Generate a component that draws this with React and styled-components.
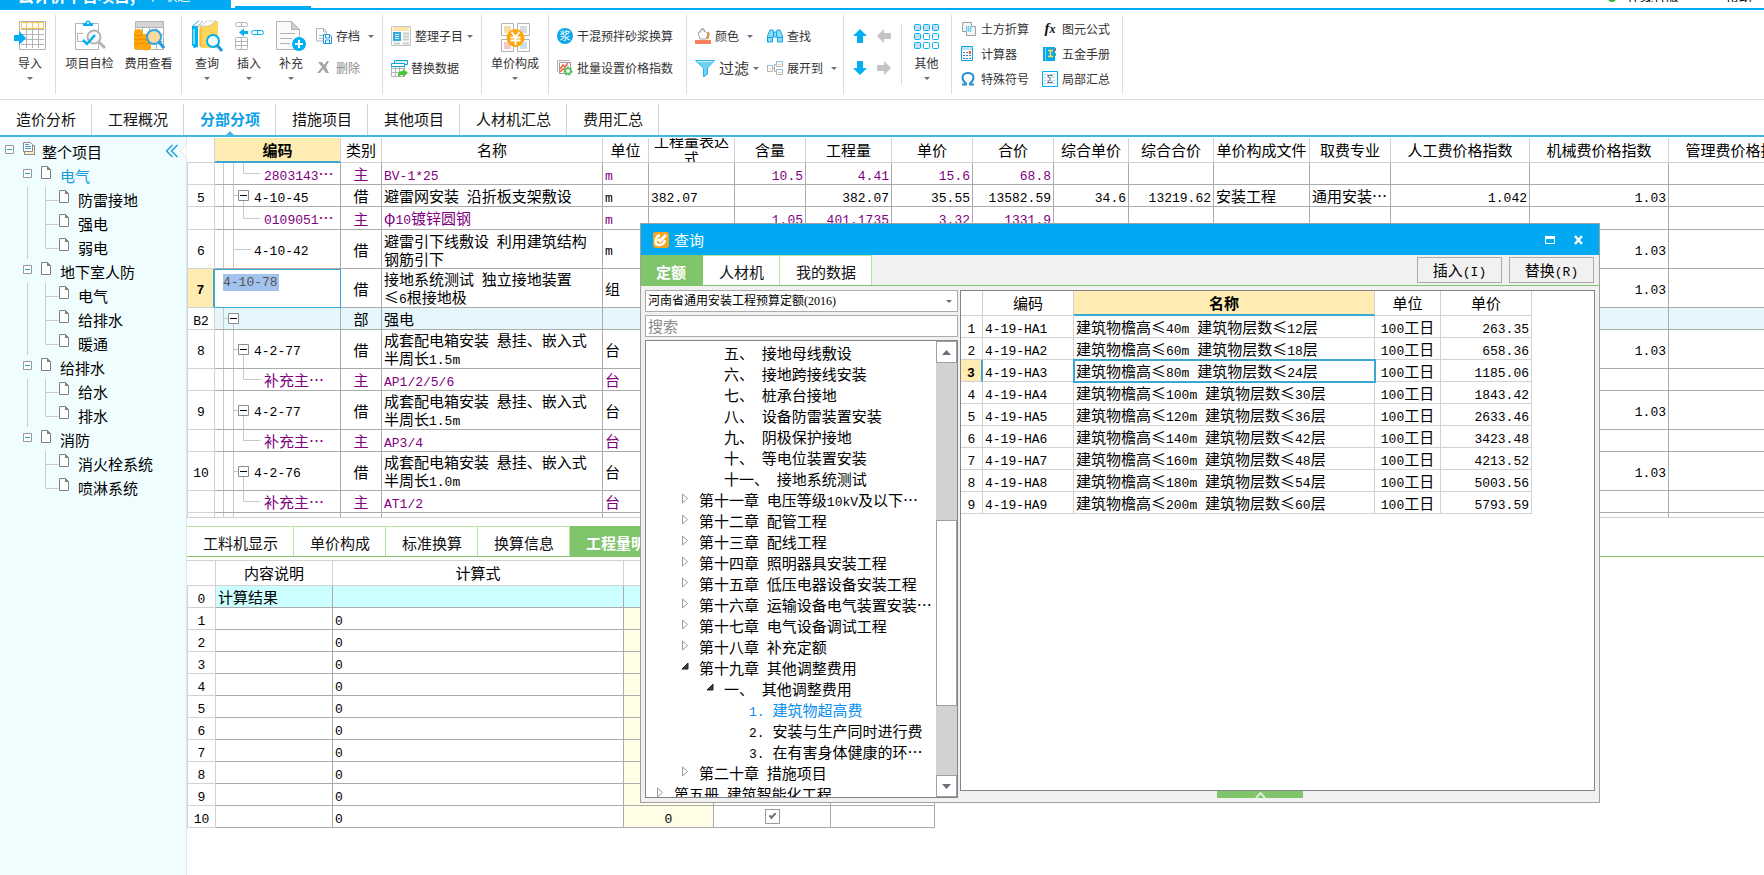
import React from "react";
import styled, { createGlobalStyle, css } from "styled-components";

const C = {
  blue: "#00a9f2",
  line: "#43b4e4",
  accent: "#3ba7d5",
  grid: "#ababab",
  soft: "#d2d2d2",
  green: "#80c56c",
  pale: "#b3e6a3",
  gold: "#feecb3",
  purple: "#800080",
};

const Global = createGlobalStyle`
  *, *::before, *::after { box-sizing: border-box; }
  html, body { margin: 0; }
  body {
    font-family: "Noto Sans CJK SC", "Noto Sans", sans-serif;
    font-size: 15px; line-height: 17px; color: #000; background: #fff; overflow: hidden;
  }
  button, input, select { font: inherit; color: inherit; margin: 0; }
  button { background: none; border: 0; padding: 0; white-space: nowrap; cursor: pointer; }
  svg { display: block; flex: none; }
  ul { list-style: none; margin: 0; padding: 0; }
`;

/* ---------- text ---------- */

const Latin = styled.span`
  font-family: "Liberation Mono", "Noto Sans CJK SC", monospace;
  font-size: 13px;
  line-height: 13px;
`;

const Text = ({ children }) =>
  String(children)
    .split(/([ -~]+)/)
    .map((part, i) => (i % 2 ? <Latin key={i}>{part}</Latin> : part));

/* ---------- page frame ---------- */

const Page = styled.div`
  min-height: 100vh;
  display: flex;
  flex-direction: column;
  overflow: hidden;
`;

const TitleStrip = styled.header`
  display: flex;
  justify-content: space-between;
  height: 10px;
  border-bottom: 2px solid ${C.blue};
`;

const TitleLeft = styled.div`
  display: flex;
  align-items: flex-end;
  gap: 4px;
`;

const Brand = styled.div`
  width: 231px;
  height: 8px;
  padding-left: 18px;
  background: ${C.blue};
  color: #fff;
  display: flex;
  align-items: flex-end;
  gap: 16px;
  overflow: hidden;
  line-height: 14px;
  font-size: 16px;
  span { font-size: 13px; }
  > * { margin-bottom: 6px; }
`;

const TitleTab = styled.div`
  width: 76px;
  height: 2px;
  background: ${C.blue};
`;

const TitleRight = styled.div`
  display: flex;
  align-items: flex-end;
  gap: 11px;
  height: 2px;
  overflow: hidden;
  margin-right: 12px;
  font-size: 13px;
  line-height: 12px;
  span:last-child { margin-left: 36px; }
`;

const Online = styled.span`
  width: 8px;
  height: 8px;
  border-radius: 4px;
  background: #2fb52f;
`;

const Toolbar = styled.div`
  display: flex;
  align-items: center;
  height: 90px;
  border-bottom: 1px solid #dcdcdc;
  font-size: 12px;
  line-height: 14px;
  color: #333;
`;

const Group = styled.div`
  display: flex;
  height: ${(p) => (p.$short ? 61 : 79)}px;
  width: ${(p) => p.$w}px;
  padding-left: ${(p) => p.$pad || 0}px;
  border-right: 1px solid #dcdcdc;
  flex: none;
  ${(p) => p.$short && css`align-items: center;`}
`;

const BigButton = styled.button`
  display: flex;
  flex-direction: column;
  align-items: center;
  flex: none;
  width: ${(p) => p.$w}px;
  padding-top: 5px;
  > svg:first-child { margin-bottom: 4px; }
`;

const Caret = styled.span`
  width: 0;
  height: 0;
  border: 3px solid transparent;
  border-top: 3px solid #6b6e7b;
  border-bottom: 0;
  ${BigButton} & { margin-top: 7px; }
  ${(p) => p.$gap && css`margin-left: ${p.$gap}px;`}
`;

const Stack = styled.div`
  display: flex;
  flex-direction: column;
  width: ${(p) => (p.$w ? p.$w + "px" : "auto")};
  padding-top: ${(p) => (p.$dense ? 1 : 5)}px;
  padding-left: ${(p) => p.$pad || 0}px;
  flex: none;
`;

const SmallButton = styled.button`
  display: flex;
  align-items: center;
  gap: ${(p) => p.$gap ?? 4}px;
  height: ${(p) => (p.$dense ? 25 : 32)}px;
  color: ${(p) => (p.$off ? "#8c8c8c" : "inherit")};
  font-size: ${(p) => (p.$large ? 15 : 12)}px;
`;

const ArrowPad = styled.div`
  display: grid;
  grid-template-columns: 16px 16px;
  column-gap: 8px;
  row-gap: 16px;
  padding-bottom: 6px;
`;

/* ---------- tabs ---------- */

const NavTabs = styled.nav`
  display: flex;
  align-items: flex-end;
  height: 37px;
  border-bottom: 2px solid ${C.line};
`;

const NavTab = styled.button`
  display: flex;
  flex-direction: column;
  align-items: center;
  height: 31px;
  padding: 6px 15px 0 16px;
  border-right: 1px solid ${C.soft};
  color: ${(p) => (p.$on ? "#0aa0e6" : "#111")};
  font-weight: ${(p) => (p.$on ? 700 : 400)};
  &::after {
    content: "";
    display: ${(p) => (p.$on ? "block" : "none")};
    margin-top: 4px;
    border: 4px solid transparent;
    border-top: 0;
    border-bottom-color: ${C.line};
  }
`;

const GreenTabs = styled.div`
  display: flex;
  height: 31px;
  border-bottom: 1px solid ${C.green};
  flex: none;
`;

const GreenTab = styled.button`
  padding: ${(p) => (p.$first ? "1px 16px 0 15px" : "1px 15px 0 16px")};
  background: ${(p) => (p.$on ? C.green : "#fff")};
  color: ${(p) => (p.$on ? "#fff" : "#111")};
  font-weight: ${(p) => (p.$on ? 700 : 400)};
  border-top: 1px solid ${(p) => (p.$on ? C.green : C.pale)};
  border-right: 1px solid ${(p) => (p.$on ? C.green : C.pale)};
`;

/* ---------- side tree ---------- */

const Body = styled.div`
  flex: 1;
  display: flex;
  min-height: 0;
`;

const Side = styled.aside`
  width: 187px;
  flex: none;
  padding-top: 2px;
  background: #f0fdff;
  border-right: 1px solid #dde6e8;
`;

const SideRow = styled.li`
  display: flex;
  height: 24px;
  padding-left: ${(p) => p.$pad}px;
  color: ${(p) => (p.$on ? "#159bd7" : "#000")};
  > svg { margin-top: ${(p) => (p.$guided ? 0 : 3)}px; }
`;

const SideLabel = styled.span`
  padding: 4px 0 0 ${(p) => p.$gap ?? 9}px;
  flex: 1;
`;

const Collapse = styled.button`
  display: flex;
  align-items: center;
  width: 20px;
  svg + svg { margin-left: 1px; }
`;

/* ---------- grids ---------- */

const Main = styled.main`
  flex: 1;
  min-width: 0;
  display: flex;
  flex-direction: column;
  gap: 8px;
`;

const GridClip = styled.div`
  overflow: hidden;
  padding-top: 1px;
`;

const Grid = styled.table`
  table-layout: fixed;
  width: ${(p) => p.$w}px;
  border-collapse: separate;
  border-spacing: 0;
`;

const Th = styled.th`
  height: 25px;
  padding: 0;
  font-weight: ${(p) => (p.$on ? 700 : 400)};
  background: ${(p) => (p.$on ? C.gold : "#fff")};
  border-right: 1px solid ${C.soft};
  border-bottom: ${(p) => (p.$on ? `2px solid ${C.accent}` : `1px solid ${C.soft}`)};
`;

const HeadBox = styled.div`
  display: flex;
  align-items: center;
  justify-content: center;
  height: ${(p) => (p.$on ? 23 : 24)}px;
  padding-bottom: ${(p) => (p.$on ? 1 : 2)}px;
  overflow: hidden;
`;

const Td = styled.td`
  height: ${(p) => p.$h || 22}px;
  padding: 0 2px;
  text-align: ${(p) => p.$align || "left"};
  white-space: pre-line;
  overflow: hidden;
  color: ${(p) => p.$color || "#000"};
  background: ${(p) => p.$bg || "transparent"};
  border-right: 1px solid ${(p) => (p.$soft ? C.soft : C.grid)};
  border-bottom: 1px solid ${(p) => (p.$soft || p.$h < 10 ? C.soft : C.grid)};
  ${(p) => p.$focus && css`outline: 2px solid ${C.accent}; outline-offset: -1px;`}
`;

const NumTd = styled(Td)`
  padding: 0;
  text-align: center;
  font-weight: ${(p) => (p.$on ? 700 : 400)};
  background: ${(p) => (p.$on ? C.gold : "#fff")};
  border-color: ${C.soft};
  ${(p) => p.$edge && css`border-left: 1px solid ${C.soft};`}
  ${(p) => p.$on && css`border-right: 2px solid ${C.accent};`}
`;

const CodeTd = styled(Td)`
  padding: 0;
  ${(p) => p.$edit && css`border-color: ${C.accent}; background: #fff; box-shadow: inset 0 1px ${C.accent};`}
`;

const CodeBox = styled.div`
  display: flex;
  align-items: center;
  height: ${(p) => p.$h}px;
  overflow: hidden;
  white-space: nowrap;
`;

const CodeInput = styled.input`
  display: block;
  width: 56px;
  height: 17px;
  margin: 5px 0 16px 8px;
  padding: 0;
  border: 0;
  background: #a3c3ee;
  color: #555;
  font-family: "Liberation Mono", monospace;
  font-size: 13px;
`;

const Check = styled.input`
  appearance: none;
  display: block;
  width: 15px;
  height: 15px;
  margin: 0 auto;
  border: 1px solid #9a9a9a;
  background: #fff;
  &::after {
    content: "";
    display: block;
    width: 7px;
    height: 4px;
    margin: 3px;
    border: solid #6b6e7b;
    border-width: 0 0 2px 2px;
    transform: rotate(-45deg);
  }
`;

/* ---------- dialog ---------- */

const Dialog = styled.section`
  position: absolute;
  left: 640px;
  top: 223px;
  width: 960px;
  height: 580px;
  display: flex;
  flex-direction: column;
  background: #f1f1f1;
  border: 1px solid #a0a0a0;
`;

const DialogTitle = styled.header`
  display: flex;
  align-items: center;
  height: 31px;
  padding: 0 13px 0 12px;
  gap: 5px;
  background: ${C.blue};
  color: #fff;
  flex: none;
  h2 { margin: 0; font-size: 15px; font-weight: 400; flex: 1; }
  button { width: 12px; }
  button + button { margin-left: 12px; }
`;

const Actions = styled.div`
  flex: 1;
  display: flex;
  justify-content: flex-end;
  gap: 7px;
  padding: 2px 5px 0 0;
`;

const ActionButton = styled.button`
  width: 85px;
  height: 26px;
  border: 1px solid ${C.grid};
  background: #f1f1f1;
`;

const DialogBody = styled.div`
  flex: 1;
  min-height: 0;
  display: flex;
  gap: 2px;
  padding: 4px;
`;

const Picker = styled.div`
  width: 313px;
  display: flex;
  flex-direction: column;
  gap: 3px;
`;

const SelectBox = styled.div`
  display: flex;
  align-items: center;
  height: 22px;
  padding-right: 5px;
  background: #fff;
  border: 1px solid ${C.grid};
  select {
    flex: 1;
    appearance: none;
    border: 0;
    background: none;
    height: 20px;
    padding: 0 2px;
    font-size: 12px;
    font-family: "Liberation Serif", "Noto Sans CJK SC", serif;
  }
`;

const SearchInput = styled.input`
  height: 22px;
  padding: 0 2px 2px;
  background: #fff;
  border: 1px solid ${C.grid};
  &::placeholder { color: #8a8a8a; }
`;

const TreeBox = styled.div`
  flex: 1;
  min-height: 0;
  display: flex;
  overflow: hidden;
  background: #fff;
  border: 1px solid #83838f;
`;

const TreeList = styled.ul`
  flex: 1;
  padding-top: 1px;
  overflow: hidden;
`;

const TreeItem = styled.li`
  display: flex;
  align-items: center;
  height: 21px;
  padding-left: ${(p) => 10 + p.$depth * 25}px;
  white-space: nowrap;
  color: ${(p) => (p.$on ? "#0a8ff0" : "#000")};
`;

const Twist = styled.span`
  width: 18px;
  padding-bottom: 2px;
  flex: none;
`;

const Scroll = styled.div`
  width: 21px;
  display: flex;
  flex-direction: column;
  background: ${C.soft};
`;

const ScrollButton = styled.button`
  display: flex;
  align-items: center;
  justify-content: center;
  height: 22px;
  background: #fff;
  border: 1px solid #a0a0a0;
`;

const Thumb = styled.div`
  height: 186px;
  margin: 157px 0 auto;
  background: #fff;
  border: 1px solid #a0a0a0;
`;

const Results = styled.div`
  flex: 1;
  min-width: 0;
  display: flex;
  flex-direction: column;
`;

const ResultsPane = styled.div`
  flex: 1;
  background: #fff;
  border: 1px solid #83838f;
`;

const PullUp = styled.button`
  display: flex;
  justify-content: center;
  align-items: flex-end;
  width: 86px;
  height: 7px;
  margin-left: 257px;
  background: ${C.green};
`;

/* ---------- toolbar icons ---------- */

const S = ({ w, h, children, ...r }) => (
  <svg width={w} height={h} viewBox={`0 0 ${w} ${h}`} fill="none" aria-hidden="true" {...r}>
    {children}
  </svg>
);
const G = "#b3b3b3";
const B = "#00b0f0";

const ImportIcon = () => (
  <S w={32} h={32}>
    <path d="M5.5 1.500h26v28h-26z" fill="#fff" stroke={G} />
    <path d="M7 9.500h23M7 14.500h23M7 19.500h23M7 24.500h23M12.500 9v19M18.500 9v19M24.500 9v19" stroke={G} />
    <path d="M7.500 2.500h22v6h-22zM12.500 3v6M18.500 3v6M24.500 3v6" stroke="#fcc44e" />
    <path d="M0 15h5v-4l7 7-7 7v-4H0z" fill={B} />
  </S>
);
const CheckDocIcon = () => (
  <S w={32} h={32}>
    <path d="M1.500 3.500h23v26h-23z" fill="#fff" stroke={G} />
    <path d="M9 3h2.500a2.500 2.500 0 0 1 5 0H19v3H9z" fill={B} />
    <circle cx="14" cy="3" r="1" fill="#fff" />
    <path d="M9 13.500H3.500v8H9" stroke={G} />
    <circle cx="20" cy="17" r="6.500" stroke={G} strokeWidth="2" fill="#f6f6f6" />
    <path d="M25 22l6 6" stroke={G} strokeWidth="3" />
    <path d="M9 20l4 4 8-9" stroke={B} strokeWidth="2.500" />
  </S>
);
const CostIcon = () => (
  <S w={32} h={32}>
    <path d="M2.500 1.500h28v28h-28z" fill="#fff" stroke={G} />
    <path d="M3 2h27v5H3z" fill="#d5d5d5" />
    <path d="M3 7.500h27M3 14.500h27M3 21.500h27M9.500 8v21M16.500 8v21M23.500 8v21" stroke={G} />
    <path d="M1 12c0-4 9-4 9 0v3c2-2 8-1 8 2v11c0 3-8 3-9 1-1 1-8 1-8-1z" fill="#ffa60d" />
    <path d="M1 15q4 2 9 0M1 19q4 2 8 0M1 23q4 2 8 0M9 19q4 2 9 0M9 23q4 2 9 0" stroke="#e88600" />
    <circle cx="21" cy="17" r="7" fill="#fdd9a0" stroke="#29a7e8" strokeWidth="2" />
    <path d="M26 22l5 6" stroke="#1b9ce2" strokeWidth="3" />
  </S>
);
const BooksIcon = () => (
  <S w={32} h={32}>
    <path d="M1 6l6-5 5 0-5 6v20l-4 1-2-3z" fill={B} />
    <path d="M2 6l6-5h4L7 6z" fill="#fff" stroke={G} strokeDasharray="1 1" />
    <path d="M3 9v15" stroke="#fff" />
    <path d="M8 7l8-6h11v27H11l-3-2z" fill="#fdd45c" />
    <path d="M9 6l7-5h9l-7 5z" fill="#fff" stroke={G} strokeDasharray="1 1" />
    <path d="M10 8v19" stroke="#e8b02c" />
    <circle cx="22" cy="21" r="6" fill="#eefaff" stroke={B} strokeWidth="2" />
    <path d="M26 25l5 6" stroke="#1b9ce2" strokeWidth="3" />
  </S>
);
const InsertIcon = () => (
  <S w={32} h={32}>
    <rect x="2.500" y="2.500" width="12" height="4" rx="2" stroke={G} />
    <path d="M8.500 3v4" stroke={G} />
    <rect x="2.500" y="17.500" width="12" height="12" rx="1" stroke={G} />
    <path d="M8.500 18v11M3 21.500h11M3 25.500h11" stroke={G} />
    <rect x="18.500" y="10.500" width="12" height="4" rx="2" stroke={B} />
    <path d="M24.500 11v4" stroke={B} />
    <path d="M6 12.500l5-4V11h4v3h-4v2.500z" fill={B} />
  </S>
);
const SupplyIcon = () => (
  <S w={32} h={32}>
    <path d="M1.500 1.500h15l8 8v20h-23z" fill="#fafafa" stroke={G} />
    <path d="M16.500 1.500v8h8z" fill="#cfcfcf" stroke={G} />
    <path d="M5 13.500h15M5 18.500h12M5 23.500h10" stroke={G} />
    <circle cx="24" cy="24" r="7" fill={B} />
    <path d="M24 20v8M20 24h8" stroke="#fff" strokeWidth="2" />
  </S>
);
const ArchiveIcon = () => (
  <S w={16} h={16}>
    <path d="M.5.500h7l3 3V13H.5z" fill="#fff" stroke={G} />
    <path d="M7.500 1v3h3M3 7.500h4M3 10.500h4" stroke={G} />
    <path d="M7.500 6.500h6l2 2v7h-8z" fill="#fff" stroke="#1b9ce2" />
    <path d="M9.500 7v3h4V7M9.500 15v-3h4v3" stroke="#1b9ce2" />
  </S>
);
const DeleteIcon = () => (
  <S w={16} h={16}>
    <path d="M2 2l4 0 2 3 3-4h2l-3 6 3 6h-3l-3-4-3 4H1l5-6z" fill="#a6a6a6" />
  </S>
);
const ArrangeIcon = () => (
  <S w={20} h={20}>
    <path d="M.5.500h19v19H.5z" fill="#fafafa" stroke="#c4c4c4" />
    <path d="M2 1h16v4H2z" fill="#fbe5aa" />
    <path d="M2 6h8v9H2z" fill="#33a9e0" />
    <path d="M4 8.500h4M4 10.500h4M4 12.500h4" stroke="#d9f3ff" />
    <path d="M12 7.500h6M12 10.500h6M12 13.500h6M3 17.500h6M12 17.500h6" stroke="#c8ccd0" strokeWidth="2" />
  </S>
);
const ReplaceIcon = () => (
  <S w={17} h={17}>
    <path d="M.5 4.500h13v12H.5zM1 8.500h12M1 12.500h12M4.500 5v11M8.500 5v11" fill="#fff" stroke={G} />
    <path d="M3.500.500h13v4h-13z" fill="#d6f3ff" stroke="#12a3df" />
    <path d="M.5 3.500h13v3H.5z" fill="#fff" stroke="#12a3df" />
    <path d="M7 15c0-3 2-4 5-4V9l5 4-5 4v-2c-2 0-3 0-5 2z" fill="#4bc435" />
  </S>
);
const PriceIcon = () => (
  <S w={32} h={32}>
    <path d="M2.500 3.500h12v12h-12zM18.500 3.500h12v12h-12zM2.500 19.500h12v12h-12zM18.500 19.500h12v12h-12z" fill="#fff" stroke={G} />
    <path d="M5 6h7v7H5z" fill="#f3dfa7" />
    <path d="M21 6h7v7h-7z" fill="#d9d9de" />
    <path d="M5 22h7v7H5z" fill="#f3c8cb" />
    <path d="M21 22h7v7h-7z" fill="#c8e0ee" />
    <circle cx="16.500" cy="18" r="9" fill="#ffa60d" />
    <path d="M12.500 12l4 5 4-5M11.500 17.500h10M11.500 20.500h10M16.500 17v8" stroke="#fff" strokeWidth="2" />
  </S>
);
const Badge = styled.span`
  width: 16px;
  height: 16px;
  border-radius: 8px;
  background: #0ba6ea;
  color: #fff;
  font-size: 11px;
  line-height: 15px;
  text-align: center;
`;
const IndexIcon = () => (
  <S w={16} h={16}>
    <path d="M.5 12V.500h12" stroke={G} />
    <path d="M2.500 2.500h11v11h-11z" fill="#fff" stroke="#9a9a9a" />
    <path d="M3 9l3-4 2 2 3-4M3 12l3-3 2 1" stroke="#f0623c" strokeWidth="1.500" />
    <circle cx="11" cy="11" r="3.500" fill="#fff" stroke="#3fb34b" strokeWidth="2" strokeDasharray="2 1" />
    <circle cx="11" cy="11" r="2.500" stroke="#3fb34b" />
  </S>
);
const ColorIcon = () => (
  <S w={16} h={16}>
    <path d="M0 12h16v4H0z" fill="#f8805c" />
    <path d="M3 5l5-4 5 5-2 5H5z" fill="#fff" stroke="#a0a0a0" />
    <path d="M5 5c0-6 5-6 4-1" stroke="#a0a0a0" />
    <path d="M13 4c1 2 1 4-1 7" stroke="#e09048" strokeWidth="2" />
  </S>
);
const FilterIcon = () => (
  <S w={20} h={17}>
    <path d="M.5.500h19L12.500 8v6l-4 3V8z" fill="#6fd0f5" stroke="#2ab0ea" />
    <path d="M2 1.500h16" stroke="#c9effd" />
  </S>
);
const BinocularIcon = () => (
  <S w={16} h={16}>
    <path d="M3 2h3v2h4V2h3l2.500 6v6h-5v-5h-5v5h-5V8z" fill="#8adcf9" stroke="#12a3df" />
    <path d="M6.500 4v5M9.500 4v5M1 9.500h4M11 9.500h4" stroke="#12a3df" />
  </S>
);
const ExpandIcon = () => (
  <S w={16} h={16}>
    <path d="M.5 5.500h5v6h-5zM9.500 1.500h6v5h-6zM9.500 9.500h6v5h-6z" fill="#fff" stroke={G} />
    <path d="M0 5.500h6M9 1.500h7M9 9.500h7" stroke="#7fc4e6" />
    <path d="M6 8.500h2M7.500 4.500v7M7 4.500h3M7 11.500h3" stroke={G} />
    <path d="M11 12.500h3M11 4.500h3M2 9h2" stroke="#f2cf8d" />
  </S>
);
const Arrow = ({ turn, color = B }) => (
  <S w={16} h={16}>
    <path d="M8 1l7 7h-4v7H5V8H1z" fill={color} transform={`rotate(${turn} 8 8)`} />
  </S>
);
const OtherIcon = () => (
  <S w={26} h={32}>
    {[0, 1, 2].map((r) =>
      [0, 1, 2].map((c) => (
        <rect key={`${r}${c}`} x={c * 9 + 0.5} y={r * 9 + 4.5} width="6" height="6" rx="1" stroke={B} fill={r === 0 || c === 0 ? "#bfe0f3" : "#fff"} />
      ))
    )}
  </S>
);
const EarthIcon = () => (
  <S w={16} h={16}>
    <path d="M1.500 1.500h9v9h-9z" fill="#f4f4f4" stroke="#9f9f9f" />
    <path d="M5.500 5.500h9v9h-9z" fill="#f4f4f4" stroke="#9f9f9f" />
    <path d="M5 5h6v6H5z" fill="#bfeaf5" />
    <path d="M5 6h6M5 8h6M5 10h6" stroke="#2bb3cf" strokeDasharray="1 1" />
  </S>
);
const CalcIcon = () => (
  <S w={16} h={16}>
    <path d="M.5.500h11v14H.5z" fill="#fff" stroke="#12a3df" />
    <path d="M1 1h10v3H1z" fill="#bce6f8" />
    <path d="M2 6.500h8M2 9.500h8M2 12.500h8" stroke="#2d87c3" strokeDasharray="2 1" />
    <path d="M8 5h2v3H8z" fill="#f0523c" />
  </S>
);
const OmegaIcon = () => (
  <S w={16} h={16}>
    <path d="M1 13.500h4v-1C2 10 1.500 8 1.500 6.500c0-6 11-6 11 0 0 1.500-.5 3.500-3.500 6v1h4" stroke="#2c90cf" strokeWidth="2" />
  </S>
);
const Fx = styled.span`
  width: 16px;
  font: italic 700 15px/16px "Liberation Serif", serif;
  color: #111;
  small { font-size: 12px; }
`;
const HandbookIcon = () => (
  <S w={16} h={16}>
    <path d="M1 1h12v14H1z" fill="#09a9ec" />
    <path d="M3.500 2v12" stroke="#7fd8fa" />
    <path d="M6 4.500h5M6 10.500h5M8.500 4v7" stroke="#ffe14d" strokeWidth="1.500" />
    <path d="M13 2h1v3h-1z" fill="#f0523c" />
    <path d="M13 7h1v3h-1z" fill="#4bc435" />
  </S>
);
const SumIcon = () => (
  <S w={16} h={16}>
    <path d="M.5.500h15v15H.5z" fill="#fff" stroke={B} />
    <path d="M2 3.500h12M2 6.500h12M2 9.500h12M2 12.500h12" stroke="#9fd8ee" strokeDasharray="2 1" />
    <path d="M10.500 5.500v-1h-5l3 3.500-3 3.500h5v-1" stroke="#6f6f6f" />
  </S>
);

/* ---------- small glyphs ---------- */

const Minus = () => (
  <S w={10} h={14}>
    <path d="M.5 3.500h8v8h-8z" fill="#fff" stroke="#9a9a9a" />
    <path d="M2 7.500h5" stroke="#2f9fd0" />
  </S>
);
const DocIcon = () => (
  <S w={11} h={14}>
    <path d="M.5.500h6l3 3v9h-9z" fill="#fff" stroke="#808080" />
    <path d="M6 0l4 4H6z" fill="#808080" />
  </S>
);
const ProjectIcon = () => (
  <S w={13} h={14}>
    <path d="M3.500 3.500h8v9h-10v-3" fill="#fdf0c4" stroke="#8a8a8a" />
    <path d="M.5.500h7l2 2v7h-9z" fill="#fff" stroke="#8a8a8a" />
    <path d="M2 2.500h4M2 4.500h6M2 6.500h6" stroke="#4d9cc4" />
  </S>
);
const SideGuide = ({ last, trunk }) => (
  <S w={32} h={24}>
    {trunk && <path d="M.5 0v24" stroke="#c4cccd" />}
    <path d={`M18.500 0v${last ? 13 : 24}M18.500 13.500h13`} stroke="#c4cccd" />
  </S>
);
const Chevrons = () => (
  <S w={13} h={14}>
    <path d="M6.500 1l-6 6 6 6M11.500 1l-6 6 6 6" stroke="#1da1d3" strokeWidth="1.500" />
  </S>
);
const Notch = () => (
  <S w={7} h={14}>
    <path d="M7 0L0 7l7 7z" fill="#fff" stroke="#e3e3e3" />
  </S>
);

/* Connector lines and fold box at the left of a code cell. */
const CodeGuide = ({ kind, h }) => {
  const m = Math.floor(h / 2);
  const line = "#c8c8c8";
  const w = { part: 28, fold: 39, leaf: 39, child: 49 }[kind];
  const x = kind === "part" ? 13 : 23;
  const box = kind === "part" || kind === "fold";
  return (
    <S w={w} h={h}>
      <path d={`M8.500 0v${h}`} stroke={line} />
      {kind !== "part" && <path d={`M18.500 0v${h}`} stroke={line} />}
      {kind === "part" && <path d={`M9 ${m}.5h5M18.500 ${m}V${h}`} stroke={line} />}
      {kind === "fold" && <path d={`M19 ${m}.5h5M28.500 ${m}V${h}`} stroke={line} />}
      {kind === "leaf" && h > 10 && <path d={`M19 ${m}.5h17`} stroke={line} />}
      {kind === "child" && <path d={`M28.500 0v${m}.5h17`} stroke={line} />}
      {box && <path d={`M${x}.5 ${m - 5}.5h10v10h-10z`} fill="#fff" stroke="#8c8c8c" />}
      {box && <path d={`M${x + 2} ${m}.5h7`} stroke="#000" />}
    </S>
  );
};

/* ---------- data ---------- */

const SIDE = [
  ["电气", ["防雷接地", "强电", "弱电"]],
  ["地下室人防", ["电气", "给排水", "暖通"]],
  ["给排水", ["给水", "排水"]],
  ["消防", ["消火栓系统", "喷淋系统"]],
];

const COLS = [
  ["", 28], ["编码", 126], ["类别", 41], ["名称", 221], ["单位", 46], ["工程量表达式", 86],
  ["含量", 71], ["工程量", 86], ["单价", 81], ["合价", 81], ["综合单价", 75], ["综合合价", 85],
  ["单价构成文件", 96], ["取费专业", 81], ["人工费价格指数", 139], ["机械费价格指数", 139], ["管理费价格指数", 139],
];

const BOX = "成套配电箱安装 悬挂、嵌入式\n半周长";
const ROWS = [
  { k: "child", code: "2803143…", t: "主", name: "BV-1*25", u: "m", v: ["", "10.5", "4.41", "15.6", "68.8"] },
  { n: "5", k: "fold", code: "4-10-45", t: "借", name: "避雷网安装 沿折板支架敷设", u: "m", v: ["382.07", "", "382.07", "35.55", "13582.59", "34.6", "13219.62", "安装工程", "通用安装…", "1.042", "1.03"] },
  { k: "child", h: 23, code: "0109051…", t: "主", name: "φ10镀锌圆钢", u: "m", v: ["", "1.05", "401.1735", "3.32", "1331.9"] },
  { n: "6", k: "leaf", h: 39, code: "4-10-42", t: "借", name: "避雷引下线敷设 利用建筑结构\n钢筋引下", u: "m", idx: true },
  { n: "7", k: "edit", h: 39, code: "4-10-78", t: "借", name: "接地系统测试 独立接地装置\n≤6根接地极", u: "组", idx: true },
  { n: "B2", k: "part", code: "", t: "部", name: "强电", u: "" },
  { n: "8", k: "fold", h: 39, code: "4-2-77", t: "借", name: BOX + "1.5m", u: "台", idx: true },
  { k: "child", code: "补充主…", t: "主", name: "AP1/2/5/6", u: "台" },
  { n: "9", k: "fold", h: 39, code: "4-2-77", t: "借", name: BOX + "1.5m", u: "台", idx: true },
  { k: "child", code: "补充主…", t: "主", name: "AP3/4", u: "台" },
  { n: "10", k: "fold", h: 39, code: "4-2-76", t: "借", name: BOX + "1.0m", u: "台", idx: true },
  { k: "child", code: "补充主…", t: "主", name: "AT1/2", u: "台" },
  { k: "stub", h: 5, code: "", t: "", name: "", u: "" },
];
const LEFT = [0, 7, 8];

const TREE = [
  [2, "", "五、 接地母线敷设"], [2, "", "六、 接地跨接线安装"], [2, "", "七、 桩承台接地"],
  [2, "", "八、 设备防雷装置安装"], [2, "", "九、 阴极保护接地"], [2, "", "十、 等电位装置安装"],
  [2, "", "十一、 接地系统测试"],
  [1, "c", "第十一章 电压等级10kV及以下…"], [1, "c", "第十二章 配管工程"], [1, "c", "第十三章 配线工程"],
  [1, "c", "第十四章 照明器具安装工程"], [1, "c", "第十五章 低压电器设备安装工程"],
  [1, "c", "第十六章 运输设备电气装置安装…"], [1, "c", "第十七章 电气设备调试工程"],
  [1, "c", "第十八章 补充定额"], [1, "o", "第十九章 其他调整费用"], [2, "o", "一、 其他调整费用"],
  [3, "", "1. 建筑物超高费", true], [3, "", "2. 安装与生产同时进行费"], [3, "", "3. 在有害身体健康的环…"],
  [1, "c", "第二十章 措施项目"], [0, "c", "第五册 建筑智能化工程"],
];

const QUOTA = [
  [40, 12, "263.35"], [60, 18, "658.36"], [80, 24, "1185.06"], [100, 30, "1843.42"], [120, 36, "2633.46"],
  [140, 42, "3423.48"], [160, 48, "4213.52"], [180, 54, "5003.56"], [200, 60, "5793.59"],
];

const sum = (list) => list.reduce((a, c) => a + c[1], 0);

/* ---------- parts ---------- */

const GridHead = ({ cols, on }) => (
  <>
    <colgroup>{cols.map(([, w], i) => <col key={i} width={w} />)}</colgroup>
    <thead>
      <tr>
        {cols.map(([label], i) => (
          <Th key={i} $on={i > 0 && label === on}>
            <HeadBox $on={i > 0 && label === on}>{label}</HeadBox>
          </Th>
        ))}
      </tr>
    </thead>
  </>
);

const CodeCell = ({ row, h, bg, color }) => (
  <CodeTd $h={h} $edit={row.k === "edit"} $bg={bg} $color={color}>
    {row.k === "edit" ? (
      <CodeInput defaultValue={row.code} aria-label="编码" />
    ) : (
      <CodeBox $h={h - 1}>
        <CodeGuide kind={row.k === "stub" ? "leaf" : row.k} h={h - 1} />
        {row.code && <span><Text>{row.code}</Text></span>}
      </CodeBox>
    )}
  </CodeTd>
);

const BillRow = ({ row }) => {
  const h = row.h || 22;
  const color = row.k === "child" ? C.purple : "#000";
  const bg = row.k === "part" ? "#e5f6fc" : undefined;
  const v = row.v || [];
  const cell = { $h: h, $color: color, $bg: bg };
  return (
    <tr>
      <NumTd $h={h} $on={row.k === "edit"} $edge>{row.n && <Text>{row.n}</Text>}</NumTd>
      <CodeCell row={row} h={h} bg={bg} color={color} />
      <Td {...cell} $align="center">{row.t}</Td>
      <Td {...cell}><Text>{row.name}</Text></Td>
      <Td {...cell}><Text>{row.u}</Text></Td>
      {COLS.slice(5).map((_, i) => (
        <Td key={i} {...cell} $align={LEFT.includes(i) ? "left" : "right"}>
          <Text>{v[i] || (row.idx && i === 10 ? "1.03" : "")}</Text>
        </Td>
      ))}
    </tr>
  );
};

const DocBox = styled.span`
  padding-top: 3px;
`;

const SidePanel = () => (
  <Side>
    <ul>
      <SideRow $pad={5}>
        <Minus />
        <S w={8} h={1} />
        <ProjectIcon />
        <SideLabel $gap={6}>整个项目</SideLabel>
        <Collapse aria-label="收起"><Chevrons /><Notch /></Collapse>
      </SideRow>
      {SIDE.map(([name, kids], i) => (
        <React.Fragment key={name}>
          <SideRow $pad={23} $on={i === 0}>
            <Minus />
            <S w={8} h={1} />
            <DocIcon />
            <SideLabel $gap={8}>{name}</SideLabel>
          </SideRow>
          {kids.map((kid, j) => (
            <SideRow key={kid} $pad={27} $guided>
              <SideGuide last={j === kids.length - 1} trunk={i < SIDE.length - 1} />
              <DocBox><DocIcon /></DocBox>
              <SideLabel $gap={8}>{kid}</SideLabel>
            </SideRow>
          ))}
        </React.Fragment>
      ))}
    </ul>
  </Side>
);

const Ribbon = () => (
  <Toolbar>
    <Group $w={56}>
      <BigButton $w={60}><ImportIcon />导入<Caret /></BigButton>
    </Group>
    <Group $w={126} $pad={4}>
      <BigButton $w={59}><CheckDocIcon />项目自检</BigButton>
      <BigButton $w={59}><CostIcon />费用查看</BigButton>
    </Group>
    <Group $w={201} $pad={4}>
      <BigButton $w={42}><BooksIcon />查询<Caret /></BigButton>
      <BigButton $w={42}><InsertIcon />插入<Caret /></BigButton>
      <BigButton $w={42}><SupplyIcon />补充<Caret /></BigButton>
      <Stack $pad={4}>
        <SmallButton><ArchiveIcon />存档<Caret $gap={4} /></SmallButton>
        <SmallButton $off disabled><DeleteIcon />删除</SmallButton>
      </Stack>
    </Group>
    <Group $w={99} $pad={8}>
      <Stack>
        <SmallButton><ArrangeIcon />整理子目<Caret /></SmallButton>
        <SmallButton $gap={3}><ReplaceIcon />替换数据</SmallButton>
      </Stack>
    </Group>
    <Group $w={67}>
      <BigButton $w={66}><PriceIcon />单价构成<Caret /></BigButton>
    </Group>
    <Group $w={138} $pad={8}>
      <Stack>
        <SmallButton><Badge>浆</Badge>干混预拌砂浆换算</SmallButton>
        <SmallButton><IndexIcon />批量设置价格指数</SmallButton>
      </Stack>
    </Group>
    <Group $w={157} $pad={8}>
      <Stack $w={72}>
        <SmallButton><ColorIcon />颜色<Caret $gap={4} /></SmallButton>
        <SmallButton $large><FilterIcon />过滤<Caret /></SmallButton>
      </Stack>
      <Stack>
        <SmallButton><BinocularIcon />查找</SmallButton>
        <SmallButton><ExpandIcon />展开到<Caret $gap={4} /></SmallButton>
      </Stack>
    </Group>
    <Group $w={58} $pad={8} $short>
      <ArrowPad>
        <button aria-label="上移"><Arrow turn={0} /></button>
        <button aria-label="左移"><Arrow turn={270} color="#c4c4c4" /></button>
        <button aria-label="下移"><Arrow turn={180} /></button>
        <button aria-label="右移"><Arrow turn={90} color="#c4c4c4" /></button>
      </ArrowPad>
    </Group>
    <Group $w={50}>
      <BigButton $w={49}><OtherIcon />其他<Caret /></BigButton>
    </Group>
    <Group $w={171} $pad={9}>
      <Stack $w={81} $dense>
        <SmallButton $dense><EarthIcon />土方折算</SmallButton>
        <SmallButton $dense><CalcIcon />计算器</SmallButton>
        <SmallButton $dense><OmegaIcon />特殊符号</SmallButton>
      </Stack>
      <Stack $dense>
        <SmallButton $dense><Fx>f<small>x</small></Fx>图元公式</SmallButton>
        <SmallButton $dense><HandbookIcon />五金手册</SmallButton>
        <SmallButton $dense><SumIcon />局部汇总</SmallButton>
      </Stack>
    </Group>
  </Toolbar>
);

const DETAIL = [["", 29], ["内容说明", 117], ["计算式", 291], ["结果", 90], ["累加标识", 117], ["引用代码", 104]];
const yellow = "#fffde6";

const DetailGrid = () => (
  <Grid $w={sum(DETAIL)}>
    <GridHead cols={DETAIL} />
    <tbody>
      {Array.from({ length: 11 }, (_, i) => {
        const bg = i === 0 ? "#ccffff" : undefined;
        return (
          <tr key={i}>
            <NumTd $edge><Text>{i}</Text></NumTd>
            <Td $bg={bg}>{i === 0 ? "计算结果" : ""}</Td>
            <Td $bg={bg}>{i ? <Text>0</Text> : ""}</Td>
            <Td $bg={bg || yellow} $align="center"><Text>0</Text></Td>
            <Td $bg={bg}>{i ? <Check type="checkbox" defaultChecked aria-label={`累加 ${i}`} /> : ""}</Td>
            <Td $bg={bg} />
          </tr>
        );
      })}
    </tbody>
  </Grid>
);

const DetailArea = styled.div`
  > ${GreenTabs} { margin-bottom: 3px; }
  table { border-top: 1px solid ${C.soft}; }
`;

const RESULT_COLS = [["", 22], ["编码", 91], ["名称", 301], ["单位", 66], ["单价", 91]];

const ResultGrid = () => (
  <Grid $w={sum(RESULT_COLS)}>
    <GridHead cols={RESULT_COLS} on="名称" />
    <tbody>
      {QUOTA.map(([m, floors, price], i) => (
        <tr key={m}>
          <NumTd $on={i === 2}><Text>{i + 1}</Text></NumTd>
          <Td $soft><Text>{`4-19-HA${i + 1}`}</Text></Td>
          <Td $soft $focus={i === 2}><Text>{`建筑物檐高≤${m}m 建筑物层数≤${floors}层`}</Text></Td>
          <Td $soft $align="center"><Text>100工日</Text></Td>
          <Td $soft $align="right"><Text>{price}</Text></Td>
        </tr>
      ))}
    </tbody>
  </Grid>
);

const Twister = ({ state }) => (
  <Twist>
    {state === "c" && <S w={8} h={11}><path d="M1.500 1v9l5-4.500z" stroke="#9a9a9a" /></S>}
    {state === "o" && <S w={9} h={9}><path d="M7 1v6H1z" fill="#404040" stroke="#222" /></S>}
  </Twist>
);

const QueryDialog = () => (
  <Dialog role="dialog" aria-label="查询">
    <DialogTitle>
      <S w={16} h={16}>
        <rect width="16" height="16" rx="3" fill="#f9a51b" />
        <path d="M7 3C3 4 2 8 3 12c3 2 8 1 9-4" stroke="#fff" strokeWidth="2.500" />
        <path d="M6 10l7-7M5 7l3 3" stroke="#fff" strokeWidth="3" />
      </S>
      <h2>查询</h2>
      <button aria-label="最大化">
        <S w={11} h={10}><path d="M.5 1.500h9v7h-9z" stroke="#fff" /><path d="M0 1h10v3H0z" fill="#fff" /></S>
      </button>
      <button aria-label="关闭">
        <S w={12} h={10}><path d="M1 1l7 8M8 1L1 9" stroke="#fff" strokeWidth="2.500" /></S>
      </button>
    </DialogTitle>
    <GreenTabs>
      <GreenTab $on $first>定额</GreenTab>
      <GreenTab>人材机</GreenTab>
      <GreenTab>我的数据</GreenTab>
      <Actions>
        <ActionButton><Text>插入(I)</Text></ActionButton>
        <ActionButton><Text>替换(R)</Text></ActionButton>
      </Actions>
    </GreenTabs>
    <DialogBody>
      <Picker>
        <SelectBox>
          <select aria-label="定额库"><option>河南省通用安装工程预算定额(2016)</option></select>
          <Caret />
        </SelectBox>
        <SearchInput placeholder="搜索" aria-label="搜索" />
        <TreeBox>
          <TreeList>
            {TREE.map(([depth, state, label, on]) => (
              <TreeItem key={label} $depth={depth} $on={on}>
                <Twister state={state} />
                <span><Text>{label}</Text></span>
              </TreeItem>
            ))}
          </TreeList>
          <Scroll>
            <ScrollButton aria-label="向上"><S w={9} h={5}><path d="M0 5l4.500-5L9 5z" fill="#6b6e7b" /></S></ScrollButton>
            <Thumb />
            <ScrollButton aria-label="向下"><S w={9} h={5}><path d="M0 0l4.500 5L9 0z" fill="#6b6e7b" /></S></ScrollButton>
          </Scroll>
        </TreeBox>
      </Picker>
      <Results>
        <ResultsPane><ResultGrid /></ResultsPane>
        <PullUp aria-label="展开"><S w={11} h={6}><path d="M1 6l4.500-5L10 6" stroke="#d9f0d2" strokeWidth="2" /></S></PullUp>
      </Results>
    </DialogBody>
  </Dialog>
);

const NAV = ["造价分析", "工程概况", "分部分项", "措施项目", "其他项目", "人材机汇总", "费用汇总"];
const LOWER = ["工料机显示", "单价构成", "标准换算", "换算信息", "工程量明细"];

export default function App() {
  return (
    <Page>
      <Global />
      <TitleStrip>
        <TitleLeft>
          <Brand><b>云计价平台项目,</b><span>广联达</span></Brand>
          <TitleTab />
        </TitleLeft>
        <TitleRight><Online /><span>在线客服</span><span>帮助</span></TitleRight>
      </TitleStrip>
      <Ribbon />
      <NavTabs>
        {NAV.map((t, i) => <NavTab key={t} $on={i === 2}>{t}</NavTab>)}
      </NavTabs>
      <Body>
        <SidePanel />
        <Main>
          <GridClip>
            <Grid $w={sum(COLS)}>
              <GridHead cols={COLS} on="编码" />
              <tbody>{ROWS.map((r, i) => <BillRow key={i} row={r} />)}</tbody>
            </Grid>
          </GridClip>
          <DetailArea>
            <GreenTabs>
              {LOWER.map((t, i) => <GreenTab key={t} $on={i === 4}>{t}</GreenTab>)}
            </GreenTabs>
            <DetailGrid />
          </DetailArea>
        </Main>
      </Body>
      <QueryDialog />
    </Page>
  );
}
